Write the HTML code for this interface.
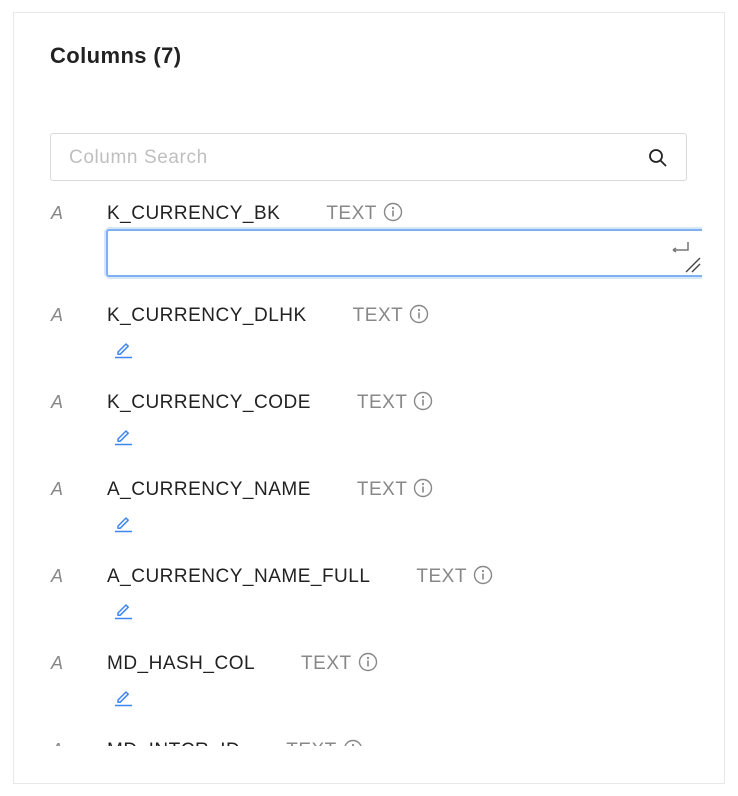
<!DOCTYPE html>
<html><head><style>
*{box-sizing:border-box;margin:0;padding:0}
body{width:738px;height:796px;background:#fff;font-family:"Liberation Sans",Arial,sans-serif;position:relative;overflow:hidden}
.panel{position:absolute;left:13px;top:12px;width:712px;height:772px;border:1px solid #e8e8e8}
h1{position:absolute;left:50px;top:43px;font-size:22px;font-weight:bold;color:#222;letter-spacing:0.4px}
.search{position:absolute;left:50px;top:133px;width:637px;height:48px;border:1px solid #d9d9d9;border-radius:3px}
.search span{position:absolute;left:18px;top:13px;font-size:19px;color:#bfbfbf;letter-spacing:0.6px}
.search svg{position:absolute;right:18px;top:14px}
.list{position:absolute;left:0;top:192px;width:738px;height:554px;overflow:hidden}
.row{position:absolute;left:0;height:30px}
.a{position:absolute;left:51px;font-size:18px;font-style:italic;color:#888;top:-1px}
.name{position:absolute;left:107px;font-size:19px;letter-spacing:0.5px;color:#222;white-space:nowrap;top:-2px}
.type{font-size:19px;color:#888;margin-left:46px;letter-spacing:0.5px}
.info{display:inline-block;vertical-align:-3px;margin-left:6px}
.pen{position:absolute;left:113px;top:33px}
.ta{position:absolute;left:106px;top:25px;width:596px;height:48px;border:2px solid #7fb1ee;border-right:none;border-radius:3px 0 0 3px;box-shadow:-2px 0 0 0 #d6e6fb, 0 2px 0 0 #d6e6fb, 0 -2px 0 0 #d6e6fb}
</style></head><body>
<div class="panel"></div>
<h1>Columns (7)</h1>
<div class="search"><span>Column Search</span>
<svg width="20" height="20" viewBox="0 0 20 20"><circle cx="8" cy="8" r="6" fill="none" stroke="#222" stroke-width="1.8"/><path d="M12.5 12.5L18 18" stroke="#222" stroke-width="1.8"/></svg></div>
<div class="list">
<svg width="0" height="0" style="position:absolute"><defs>
<symbol id="i" viewBox="0 0 20 20"><circle cx="10" cy="10" r="8.5" fill="none" stroke="#888" stroke-width="1.4"/><circle cx="10" cy="6" r="1.1" fill="#888"/><path d="M10 8.5v6" stroke="#888" stroke-width="1.6"/></symbol>
<symbol id="p" viewBox="0 0 20 20"><path d="M5 13l8-8 2.2 2.2-8 8H5z" fill="none" stroke="#3d86f0" stroke-width="1.5" stroke-linejoin="round"/><path d="M2 18.5h17" stroke="#3d86f0" stroke-width="1.5"/></symbol></defs></svg>
<div class="row" style="top:12px"><span class="a">A</span><span class="name">K_CURRENCY_BK<span class="type">TEXT</span><svg class="info" width="20" height="20"><use href="#i"/></svg></span>
<div class="ta"></div>
<svg style="position:absolute;left:668px;top:36px" width="36" height="36" viewBox="0 0 36 36"><path d="M20 2v8H5M5 10l3-2M5 10l3 2" fill="none" stroke="#777" stroke-width="1.5"/><path d="M18 32L32 18M24 32L32 24" stroke="#444" stroke-width="1.4"/></svg>
</div>
<div class="row" style="top:114px"><span class="a">A</span><span class="name">K_CURRENCY_DLHK<span class="type">TEXT</span><svg class="info" width="20" height="20"><use href="#i"/></svg></span><svg class="pen" width="20" height="20"><use href="#p"/></svg></div>
<div class="row" style="top:201px"><span class="a">A</span><span class="name">K_CURRENCY_CODE<span class="type">TEXT</span><svg class="info" width="20" height="20"><use href="#i"/></svg></span><svg class="pen" width="20" height="20"><use href="#p"/></svg></div>
<div class="row" style="top:288px"><span class="a">A</span><span class="name">A_CURRENCY_NAME<span class="type">TEXT</span><svg class="info" width="20" height="20"><use href="#i"/></svg></span><svg class="pen" width="20" height="20"><use href="#p"/></svg></div>
<div class="row" style="top:375px"><span class="a">A</span><span class="name">A_CURRENCY_NAME_FULL<span class="type">TEXT</span><svg class="info" width="20" height="20"><use href="#i"/></svg></span><svg class="pen" width="20" height="20"><use href="#p"/></svg></div>
<div class="row" style="top:462px"><span class="a">A</span><span class="name">MD_HASH_COL<span class="type">TEXT</span><svg class="info" width="20" height="20"><use href="#i"/></svg></span><svg class="pen" width="20" height="20"><use href="#p"/></svg></div>
<div class="row" style="top:549px"><span class="a">A</span><span class="name">MD_INTCR_ID<span class="type">TEXT</span><svg class="info" width="20" height="20"><use href="#i"/></svg></span></div>
</div>
</body></html>
